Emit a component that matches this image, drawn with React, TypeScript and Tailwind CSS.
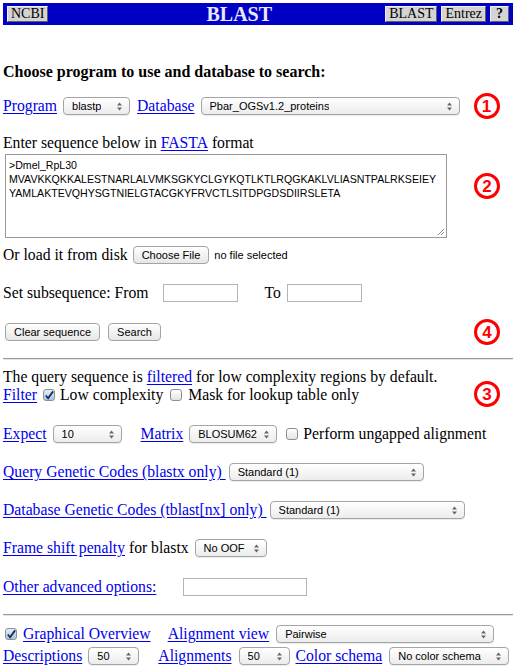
import React from 'react';

const serif = { fontFamily: '"Liberation Serif", "Times New Roman", serif' };
const ui = { fontFamily: '"Liberation Sans", Arial, sans-serif' };

function Arrows() {
  return (
    <svg width="7" height="9" viewBox="0 0 7 9" className="shrink-0">
      <path d="M3.5 0.5 L6 3.5 L1 3.5 Z" fill="#666" />
      <path d="M3.5 8.5 L6 5.5 L1 5.5 Z" fill="#666" />
    </svg>
  );
}

function Select({ value, w }: { value: string; w: string }) {
  return (
    <div
      className={`${w} shrink-0 h-[18px] flex items-center justify-between pl-[8px] pr-[6px] rounded-[4px] border border-[#a4a4a4] bg-gradient-to-b from-white to-[#ececec] shadow-[0_1px_0_rgba(0,0,0,0.08)] text-[11px] text-black whitespace-nowrap`}
      style={ui}
    >
      <span className="truncate">{value}</span>
      <Arrows />
    </div>
  );
}

function Btn({ children }: { children: React.ReactNode }) {
  return (
    <div
      className="h-[18px] px-[8px] flex items-center rounded-[4px] border border-[#a4a4a4] bg-gradient-to-b from-white to-[#e6e6e6] text-[11px] text-black whitespace-nowrap"
      style={ui}
    >
      {children}
    </div>
  );
}

function Box({ w }: { w: string }) {
  return <div className={`${w} shrink-0 h-[18px] border border-[#b4b4b4] bg-white`} />;
}

function Check({ on }: { on?: boolean }) {
  return (
    <div
      className={`w-[12px] h-[12px] rounded-[3px] border border-[#8f8f8f] bg-gradient-to-b flex items-center justify-center shrink-0 ${
        on ? 'from-[#e4eefa] to-[#a9c4e6]' : 'from-white to-[#e4e4e4]'
      }`}
    >
      {on && (
        <svg width="11" height="11" viewBox="0 0 11 11">
          <path d="M2 5.5 L4.5 8.5 L10 1" fill="none" stroke="#1f2d50" strokeWidth="2" />
        </svg>
      )}
    </div>
  );
}

function Mark({ n }: { n: string }) {
  return (
    <div
      className="w-[26px] h-[26px] rounded-full border-[3px] border-[#ff0000] flex items-center justify-center text-[#ff0000] text-[17px] font-bold leading-none shrink-0"
      style={ui}
    >
      {n}
    </div>
  );
}

function A({ children }: { children: React.ReactNode }) {
  return <span className="text-[#0000ee] underline underline-offset-[2px] whitespace-nowrap">{children}</span>;
}

function HeadBtn({ children }: { children: React.ReactNode }) {
  return (
    <div className="inline-flex h-[16px] px-[3px] items-center bg-[#d4d4d4] border border-t-[#f0f0f0] border-l-[#f0f0f0] border-r-[#606060] border-b-[#606060] text-[14px] leading-none text-black">
      {children}
    </div>
  );
}

export default function App() {
  return (
    <div className="w-[516px] h-[669px] bg-white text-black text-[15.7px] overflow-hidden whitespace-nowrap" style={serif}>
      {/* NCBI header */}
      <div className="mt-[3px] mx-[3px] h-[22px] bg-[#0000c4] flex items-center px-[4px]">
        <HeadBtn>NCBI</HeadBtn>
        <span className="ml-[158px] text-[20px] font-bold text-[#e8e8ff] leading-none">BLAST</span>
        <div className="ml-auto flex gap-[4px]">
          <HeadBtn>BLAST</HeadBtn>
          <HeadBtn>Entrez</HeadBtn>
          <HeadBtn><b className="px-[2px]">?</b></HeadBtn>
        </div>
      </div>

      <div className="px-[3px]">
        <div className="mt-[37px] h-[20px] flex items-center font-bold text-[16px]">
          Choose program to use and database to search:
        </div>

        {/* program / database */}
        <div className="mt-[14px] h-[20px] flex items-center">
          <A>Program</A>
          <div className="ml-[6px]"><Select value="blastp" w="w-[67px]" /></div>
          <span className="ml-[7px]"><A>Database</A></span>
          <div className="ml-[6px]"><Select value="Pbar_OGSv1.2_proteins" w="w-[259px]" /></div>
          <div className="ml-[14px]"><Mark n="1" /></div>
        </div>

        <div className="mt-[17px] h-[20px] flex items-center">
          Enter sequence below in&nbsp;<A>FASTA</A>&nbsp;format
        </div>

        <div className="mt-[1px] flex items-start">
          <div
            className="ml-[2px] w-[442px] h-[84px] border border-[#999] relative text-[10.6px] leading-[14px] px-[3px] py-[3px]"
            style={ui}
          >
            <div>&gt;Dmel_RpL30</div>
            <div>MVAVKKQKKALESTNARLALVMKSGKYCLGYKQTLKTLRQGKAKLVLIASNTPALRKSEIEY</div>
            <div>YAMLAKTEVQHYSGTNIELGTACGKYFRVCTLSITDPGDSDIIRSLETA</div>
            <svg className="absolute right-[1px] bottom-[1px]" width="8" height="8" viewBox="0 0 8 8">
              <path d="M7 1 L1 7 M7 4 L4 7" stroke="#888" strokeWidth="1" />
            </svg>
          </div>
          <div className="ml-[27px] mt-[19px]"><Mark n="2" /></div>
        </div>

        <div className="mt-[7px] h-[20px] flex items-center">
          Or load it from disk
          <div className="ml-[5px]"><Btn>Choose File</Btn></div>
          <span className="ml-[5px] text-[11px]" style={ui}>no file selected</span>
        </div>

        <div className="mt-[18px] h-[20px] flex items-center">
          Set subsequence: From
          <div className="ml-[14px]"><Box w="w-[75px]" /></div>
          <span className="ml-[27px]">To</span>
          <div className="ml-[6px]"><Box w="w-[75px]" /></div>
        </div>

        <div className="mt-[19px] h-[20px] flex items-center">
          <div className="ml-[2px]"><Btn>Clear sequence</Btn></div>
          <div className="ml-[8px]"><Btn>Search</Btn></div>
          <div className="ml-auto mr-[13px]"><Mark n="4" /></div>
        </div>
      </div>

      <div className="mt-[16px] mx-[3px] h-[2px] border-t border-[#9a9a9a] border-b border-b-[#e4e4e4]" />

      <div className="px-[3px]">
        <div className="mt-[8px] flex items-start">
          <div className="leading-[18px]">
            <div>
              The query sequence is <A>filtered</A> for low complexity regions by default.
            </div>
            <div className="flex items-center">
              <A>Filter</A>
              <div className="ml-[6px]"><Check on /></div>
              <span className="ml-[5px]">Low complexity</span>
              <div className="ml-[7px]"><Check /></div>
              <span className="ml-[6px]">Mask for lookup table only</span>
            </div>
          </div>
          <div className="ml-auto mr-[13px] mt-[13px]"><Mark n="3" /></div>
        </div>

        <div className="mt-[17px] h-[20px] flex items-center">
          <A>Expect</A>
          <div className="ml-[6px]"><Select value="10" w="w-[69px]" /></div>
          <span className="ml-[19px]"><A>Matrix</A></span>
          <div className="ml-[6px]"><Select value="BLOSUM62" w="w-[88px]" /></div>
          <div className="ml-[9px]"><Check /></div>
          <span className="ml-[5px]">Perform ungapped alignment</span>
        </div>

        <div className="mt-[18px] h-[20px] flex items-center">
          <A>Query Genetic Codes (blastx only)&nbsp;</A>
          <div className="ml-[3px]"><Select value="Standard (1)" w="w-[195px]" /></div>
        </div>

        <div className="mt-[18px] h-[20px] flex items-center">
          <A>Database Genetic Codes (tblast[nx] only)&nbsp;</A>
          <div className="ml-[3px]"><Select value="Standard (1)" w="w-[195px]" /></div>
        </div>

        <div className="mt-[18px] h-[20px] flex items-center">
          <A>Frame shift penalty</A>&nbsp;for blastx
          <div className="ml-[6px]"><Select value="No OOF" w="w-[72px]" /></div>
        </div>

        <div className="mt-[19px] h-[20px] flex items-center">
          <A>Other advanced options:</A>
          <div className="ml-[27px]"><Box w="w-[124px]" /></div>
        </div>
      </div>

      <div className="mt-[17px] mx-[3px] h-[2px] border-t border-[#9a9a9a] border-b border-b-[#e4e4e4]" />

      <div className="px-[3px]">
        <div className="mt-[8px] h-[20px] flex items-center">
          <div className="ml-[2px]"><Check on /></div>
          <span className="ml-[6px]"><A>Graphical Overview</A></span>
          <span className="ml-[17px]"><A>Alignment view</A></span>
          <div className="ml-[7px]"><Select value="Pairwise" w="w-[218px]" /></div>
        </div>
        <div className="mt-[2px] h-[20px] flex items-center">
          <A>Descriptions</A>
          <div className="ml-[6px]"><Select value="50" w="w-[51px]" /></div>
          <span className="ml-[19px]"><A>Alignments</A></span>
          <div className="ml-[7px]"><Select value="50" w="w-[51px]" /></div>
          <span className="ml-[6px]"><A>Color schema</A></span>
          <div className="ml-[7px]"><Select value="No color schema" w="w-[120px]" /></div>
        </div>
      </div>
    </div>
  );
}
